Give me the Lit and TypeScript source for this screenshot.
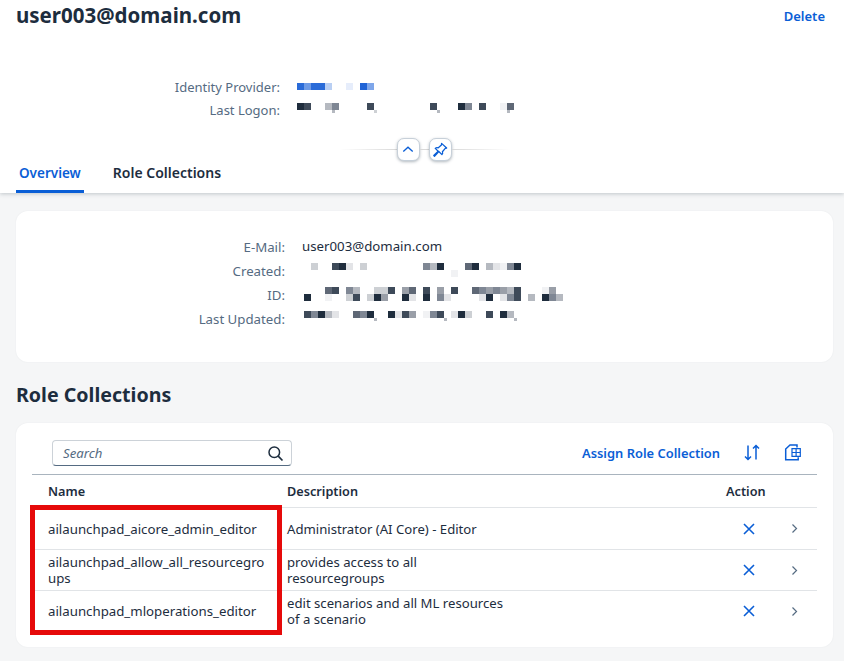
import { LitElement, html, css, svg } from "lit";
import { customElement, property } from "lit/decorators.js";

const PALETTE: Record<string, string> = {
  "0": "#1f2d3d", "1": "#3e4a59", "2": "#5f6876", "3": "#7f8794", "4": "#9a9fa8",
  "5": "#b5b9c0", "6": "#cdd0d4", "7": "#e3e4e7", "8": "#f1f2f4",
  a: "#2a6bd8", b: "#6e9be6", c: "#b9cff3", d: "#e6edfb", e: "#1f63d6", f: "#7ea6ea",
};

@customElement("pixel-mosaic")
class PixelMosaic extends LitElement {
  @property({ type: Array }) rows: string[] = [];
  static styles = css`
    :host { display: block; }
    .row { display: flex; height: 7px; }
    .row.tick { height: 3px; }
    .cell { width: 7px; flex: none; }
    .tick .cell { width: 3px; margin-right: 4px; }
  `;
  render() {
    return this.rows.map((r) => {
      const tick = r.startsWith("~");
      const cells = tick ? r.slice(1) : r;
      return html`<div class="row ${tick ? "tick" : ""}">${[...cells].map(
        (c) => html`<span class="cell" style="background:${PALETTE[c] ?? "transparent"}"></span>`
      )}</div>`;
    });
  }
}

const ICONS = {
  chevUp: svg`<path d="M5.5 13.5 11.5 8l6 5.5" fill="none" stroke="currentColor" stroke-width="1.7"/>`,
  pin: svg`<path d="M13.5 3l6.5 6-1.8 .5-3.6 4.2c.7 1.6 .3 2.8-.6 3.7L10 13.4 4.5 19.5l-1-1L9.2 13 5.4 9.4c1-1 2.4-1.3 3.9-.7l4-3.6z" fill="none" stroke="currentColor" stroke-width="1.6" stroke-linejoin="round"/>`,
};

@customElement("app-root")
class AppRoot extends LitElement {
  static styles = css`
    :host {
      display: block; position: relative; width: 844px; height: 661px; overflow: hidden;
      background: #f5f6f7; font-family: "Noto Sans", "Open Sans", sans-serif; font-size: 13.25px; color: #1d2d3e;
    }
    .header { height: 193px; background: #fff; box-shadow: 0 1px 4px rgba(34,54,73,.25); position: relative; display: flex; flex-direction: column; }
    .titlebar { display: flex; justify-content: space-between; align-items: center; padding: 4px 19px 0 16px; height: 26px; box-sizing: border-box; }
    .title { font-size: 20.5px; font-weight: 700; line-height: 26px; }
    .delete { color: #0a5ed6; font-size: 13px; font-weight: 600; margin-top: 1px; }
    .attrs { margin-top: 49px; display: flex; flex-direction: column; }
    .attr { display: grid; grid-template-columns: 280px auto; column-gap: 17px; height: 23px; align-items: center; }
    .attr .k { text-align: right; color: #556b82; font-size: 13px; }
    .mosaic-logon { align-self: start; margin-top: 5px; }
    .collapse { margin-top: 17px; height: 23px; display: flex; align-items: center; justify-content: center; padding-left: 5px; }
    .line { width: 57px; height: 1px; }
    .line.l { background: linear-gradient(to right, rgba(217,217,217,0), #d9d9d9); }
    .line.r { background: linear-gradient(to left, rgba(217,217,217,0), #d9d9d9); width: 58px; }
    .line.m { width: 9px; background: #d9d9d9; }
    .rbtn { width: 23px; height: 23px; box-sizing: border-box; border-radius: 7px; background: #fff; border: 1px solid #c7d0d9; box-shadow: 0 1px 3px rgba(34,54,73,.35); color: #0a5ed6; display: flex; align-items: center; justify-content: center; }
    .rbtn svg { width: 18px; height: 18px; }
    .tabs { display: flex; gap: 26px; padding-left: 16px; height: 32px; box-sizing: border-box; }
    .tab { padding: 0 3px; font-weight: 600; font-size: 14px; line-height: 24px; }
    .tab.active { font-size: 13.5px; color: #0a5ed6; border-bottom: 3px solid #0a5ed6; height: 32px; box-sizing: border-box; }
    .content { padding: 18px 11px 0 16px; }
    .card { background: #fff; border-radius: 12px; box-shadow: 0 0 2px rgba(34,54,73,.06); }
    .details { height: 151px; padding-top: 24px; box-sizing: border-box; }
    .drow { display: grid; grid-template-columns: 269px auto; column-gap: 17px; height: 24px; align-items: center; }
    .drow .k { text-align: right; color: #556b82; }
    .drow .v { margin-top: -2px; }
    .mosaic { margin-left: 2px; align-self: start; margin-top: 4px; }
    h2 { margin: 19px 0 14px; font-size: 19.6px; font-weight: 700; line-height: 28px; color: #1d2d3e; }
    .tablecard { height: 224px; padding: 17px 16px 0; box-sizing: border-box; }
    .toolbar { display: flex; align-items: flex-start; height: 35px; border-bottom: 1px solid #a9b4be; padding: 0 16px 8px 20px; box-sizing: border-box; }
    .search { width: 240px; height: 26px; box-sizing: border-box; border: 1px solid #ccd2d8; border-bottom: 1px solid #556b82; border-radius: 4px; display: flex; align-items: center; justify-content: space-between; padding: 0 7px 0 10px; font-style: italic; color: #556b82; font-size: 13.2px; }
    .search svg { width: 17px; height: 17px; color: #1d2d3e; }
    .assign { margin-left: auto; color: #0a5ed6; font-weight: 600; font-size: 12.9px; line-height: 26px; }
    .tool { color: #0a5ed6; width: 18px; height: 18px; margin-top: 4px; }
    .tool.sort { margin-left: 23px; }
    .tool.settings { margin-left: 22px; }
    .tr { display: grid; grid-template-columns: 255px 439px 46px 1fr; border-bottom: 1px solid #e1e4e7; align-items: center; box-sizing: border-box; }
    .tr:last-child { border-bottom: 0; padding-bottom: 1px; }
    .th { height: 33px; font-weight: 600; font-size: 12.7px; }
    .td { height: 41px; line-height: 16px; font-size: 13.25px; }
    .td.first { height: 42px; }
    .name { padding: 0 16px; word-break: break-all; }
    .desc { max-width: 225px; font-size: 13.15px; }
    .x { color: #0a5ed6; display: flex; justify-content: flex-start; padding-left: 16px; }
    .x svg { width: 14px; height: 14px; }
    .chev { color: #556b82; display: flex; justify-content: center; }
    .chev svg { width: 9px; height: 11px; }
    .mark { position: absolute; left: 30px; top: 505px; width: 252px; height: 130px; box-sizing: border-box; border: 5px solid #e60a0a; pointer-events: none; }
  `;

  render() {
    const rowsData = [
      { n: "ailaunchpad_aicore_admin_editor", d: "Administrator (AI Core) - Editor", first: true },
      { n: "ailaunchpad_allow_all_resourcegroups", d: "provides access to all resourcegroups", first: false },
      { n: "ailaunchpad_mloperations_editor", d: "edit scenarios and all ML resources of a scenario", first: false },
    ];
    return html`
      <div class="header">
        <div class="titlebar"><div class="title">user003@domain.com</div><div class="delete">Delete</div></div>
        <div class="attrs">
          <div class="attr"><div class="k">Identity Provider:</div><pixel-mosaic .rows=${["abaac..d.ef"]}></pixel-mosaic></div>
          <div class="attr"><div class="k">Last Logon:</div><pixel-mosaic class="mosaic-logon" .rows=${["01..53....1........1...03.1..82", "~.....5.....6........5.........5"]}></pixel-mosaic></div>
        </div>
        <div class="collapse">
          <div class="line l"></div>
          <div class="rbtn"><svg viewBox="0 0 23 23">${ICONS.chevUp}</svg></div>
          <div class="line m"></div>
          <div class="rbtn"><svg viewBox="0 0 23 23">${ICONS.pin}</svg></div>
          <div class="line r"></div>
        </div>
        <div class="tabs"><div class="tab active">Overview</div><div class="tab">Role Collections</div></div>
      </div>
      <div class="content">
        <div class="card details">
          <div class="drow"><div class="k">E-Mail:</div><div class="v">user003@domain.com</div></div>
          <div class="drow"><div class="k">Created:</div><pixel-mosaic class="mosaic" .rows=${[".6..107.6........350...20.57830", ".....................8"]}></pixel-mosaic></div>
          <div class="drow"><div class="k">ID:</div><pixel-mosaic class="mosaic" .rows=${["...21.35..661.42.1.4.1..2343451...84", "0..8..61.604..07.0.37....70.731.5.035"]}></pixel-mosaic></div>
          <div class="drow"><div class="k">Last Updated:</div><pixel-mosaic class="mosaic" .rows=${["13057..230..0714.831.706..1.05", "~..........5.........5.........5"]}></pixel-mosaic></div>
        </div>
        <h2>Role Collections</h2>
        <div class="card tablecard">
          <div class="toolbar">
            <div class="search">Search<svg viewBox="0 0 17 17"><circle cx="7.3" cy="7.3" r="5.3" fill="none" stroke="currentColor" stroke-width="1.5"/><path d="M11.2 11.2 15.5 15.5" stroke="currentColor" stroke-width="1.7"/></svg></div>
            <div class="assign">Assign Role Collection</div>
            <svg class="tool sort" viewBox="0 0 18 18" fill="none" stroke="currentColor" stroke-width="1.5"><path d="M5 1.5v14M2 12.5l3 3 3-3M13 15.5v-14M10 4.5l3-3 3 3"/></svg>
            <svg class="tool settings" viewBox="0 0 18 18" fill="none" stroke="currentColor" stroke-width="1.5"><path d="M14 3.5V1H7L2.7 5v10.8h12.5v-2.5"/><path d="M9 4.7h8.3v7.6H9z" stroke-width="1.2"/><path d="M9 8.5h8.3M13.1 4.7v7.6" stroke-width="1.2"/></svg>
          </div>
          <div class="tr th"><div class="name">Name</div><div>Description</div><div>Action</div><div></div></div>
          ${rowsData.map((r) => html`
            <div class="tr td ${r.first ? "first" : ""}">
              <div class="name">${r.n}</div>
              <div class="desc">${r.d}</div>
              <div class="x"><svg viewBox="0 0 14 14" fill="none" stroke="currentColor" stroke-width="1.6"><path d="M2 2l10 10M12 2 2 12"/></svg></div>
              <div class="chev"><svg viewBox="0 0 9 11" fill="none" stroke="currentColor" stroke-width="1.2"><path d="M2.5 1.5 6.5 5.5 2.5 9.5"/></svg></div>
            </div>`)}
        </div>
      </div>
      <div class="mark"></div>
    `;
  }
}
